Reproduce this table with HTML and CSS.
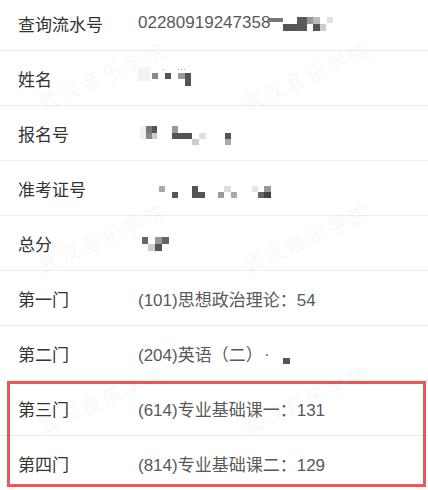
FILE: index.html
```html
<!DOCTYPE html>
<html lang="zh-CN">
<head>
    <meta charset="UTF-8">
    <meta name="viewport" content="width=device-width, initial-scale=1.0">
    <title>成绩查询</title>
    <link rel="stylesheet" href="styles.css">
</head>
<body>
    <div class="page">
        <div class="list">
            <div class="row">
                <span class="label">查询流水号</span>
                <span class="value">02280919247358<svg class="mosaic shift" width="66" height="24" viewBox="0 0 66 24">
                    <rect x="0" y="7" width="15" height="4" fill="#777"/>
                    <rect x="15" y="13" width="14" height="7" fill="#555"/>
                    <rect x="29" y="6" width="10" height="14" fill="#5a5a5a"/>
                    <rect x="39" y="6" width="6" height="7" fill="#999"/>
                    <rect x="45" y="6" width="7" height="7" fill="#bbb"/>
                    <rect x="45" y="13" width="7" height="7" fill="#555"/>
                    <rect x="52" y="13" width="6" height="7" fill="#ccc"/>
                    <rect x="59" y="6" width="6" height="6" fill="#e2e2e2"/>
                </svg></span>
            </div>
            <div class="row">
                <span class="label">姓名</span>
                <span class="value"><svg class="mosaic" width="60" height="24" viewBox="0 0 60 24">
                    <rect x="0" y="1" width="12" height="14" fill="#f3f3f3"/>
                    <rect x="14" y="7" width="6" height="6" fill="#888"/>
                    <rect x="27" y="7" width="6" height="6" fill="#555"/>
                    <rect x="40" y="7" width="7" height="6" fill="#999"/>
                    <rect x="47" y="7" width="6" height="13" fill="#555"/>
                    <rect x="25" y="3" width="1" height="1" fill="#aaa"/>
                    <rect x="40" y="3" width="1" height="1" fill="#aaa"/>
                    <rect x="43" y="3" width="1" height="1" fill="#aaa"/>
                    <rect x="46" y="3" width="1" height="1" fill="#aaa"/>
                </svg></span>
            </div>
            <div class="row">
                <span class="label">报名号</span>
                <span class="value"><svg class="mosaic" width="96" height="24" viewBox="0 0 96 24">
                    <rect x="2" y="5" width="6" height="13" fill="#f0f0f0"/>
                    <rect x="8" y="5" width="6" height="7" fill="#777"/>
                    <rect x="14" y="5" width="5" height="7" fill="#555"/>
                    <rect x="8" y="12" width="6" height="6" fill="#888"/>
                    <rect x="14" y="12" width="5" height="6" fill="#ccc"/>
                    <rect x="34" y="5" width="6" height="7" fill="#999"/>
                    <rect x="34" y="12" width="20" height="6" fill="#555"/>
                    <rect x="54" y="18" width="7" height="6" fill="#ccc"/>
                    <rect x="61" y="12" width="7" height="6" fill="#e0e0e0"/>
                    <rect x="87" y="12" width="6" height="6" fill="#555"/>
                    <rect x="87" y="18" width="6" height="6" fill="#aaa"/>
                </svg></span>
            </div>
            <div class="row">
                <span class="label">准考证号</span>
                <span class="value"><svg class="mosaic" width="136" height="24" viewBox="0 0 136 24">
                    <rect x="21" y="10" width="6" height="6" fill="#aaa"/>
                    <rect x="34" y="16" width="6" height="6" fill="#555"/>
                    <rect x="54" y="10" width="6" height="12" fill="#555"/>
                    <rect x="60" y="16" width="7" height="6" fill="#555"/>
                    <rect x="80" y="16" width="6" height="6" fill="#999"/>
                    <rect x="86" y="10" width="7" height="6" fill="#ddd"/>
                    <rect x="93" y="16" width="6" height="6" fill="#aaa"/>
                    <rect x="114" y="10" width="6" height="6" fill="#e5e5e5"/>
                    <rect x="120" y="16" width="6" height="6" fill="#666"/>
                    <rect x="126" y="10" width="7" height="6" fill="#999"/>
                    <rect x="126" y="16" width="7" height="6" fill="#444"/>
                </svg></span>
            </div>
            <div class="row">
                <span class="label">总分</span>
                <span class="value"><svg class="mosaic" width="34" height="24" viewBox="0 0 34 24">
                    <rect x="4" y="6" width="6" height="7" fill="#666"/>
                    <rect x="10" y="13" width="7" height="7" fill="#ccc"/>
                    <rect x="17" y="6" width="7" height="7" fill="#999"/>
                    <rect x="17" y="13" width="7" height="7" fill="#555"/>
                    <rect x="24" y="6" width="7" height="7" fill="#666"/>
                </svg></span>
            </div>
            <div class="row">
                <span class="label">第一门</span>
                <span class="value">(101)思想政治理论：54</span>
            </div>
            <div class="row">
                <span class="label">第二门</span>
                <span class="value">(204)英语（二）<svg class="mosaic" width="30" height="24" viewBox="0 0 30 24">
                    <rect x="3" y="13" width="2" height="2" fill="#888"/>
                    <rect x="20" y="17" width="7" height="6" fill="#555"/>
                </svg></span>
            </div>
            <div class="marked">
                <div class="row">
                    <span class="label">第三门</span>
                    <span class="value">(614)专业基础课一：131</span>
                </div>
                <div class="row">
                    <span class="label">第四门</span>
                    <span class="value">(814)专业基础课二：129</span>
                </div>
            </div>
        </div>

        <div class="watermark">
            <span>武汉音乐学院</span>
            <span>武汉音乐学院</span>
            <span>武汉音乐学院</span>
            <span>武汉音乐学院</span>
            <span>武汉音乐学院</span>
            <span>武汉音乐学院</span>
        </div>
    </div>
</body>
</html>
```

FILE: styles.css
```css
body {
    margin: 0;
    background-color: white;
    font-family: "Liberation Sans", "Noto Sans CJK SC", sans-serif;
    font-size: 17px;
}
.page {
    position: relative;
    height: 490px;
    overflow: hidden;
}
.list {
    margin-top: -4px;
}
.row {
    display: flex;
    align-items: center;
    height: 54px;
    padding-left: 18px;
    border-bottom: 1px solid #ededed;
}
.label {
    width: 120px;
    flex-shrink: 0;
    color: #333;
}
.value {
    display: flex;
    align-items: center;
    color: #595959;
}
.mosaic {
    display: block;
}
.mosaic.shift {
    margin-left: -2px;
}
.marked {
    position: relative;
}
.marked::after {
    content: "";
    position: absolute;
    top: 0;
    left: 7px;
    right: 2px;
    bottom: 4px;
    border: 3px solid #e9565c;
    pointer-events: none;
}
.watermark {
    position: absolute;
    top: -6px;
    left: 0;
    width: 408px;
    display: grid;
    grid-template-columns: 204px 204px;
    grid-auto-rows: 162px;
    pointer-events: none;
}
.watermark span {
    display: flex;
    align-items: center;
    justify-content: center;
    transform: rotate(-24deg);
    font-size: 20px;
    letter-spacing: 3px;
    color: rgba(0, 0, 0, 0.05);
}
```
